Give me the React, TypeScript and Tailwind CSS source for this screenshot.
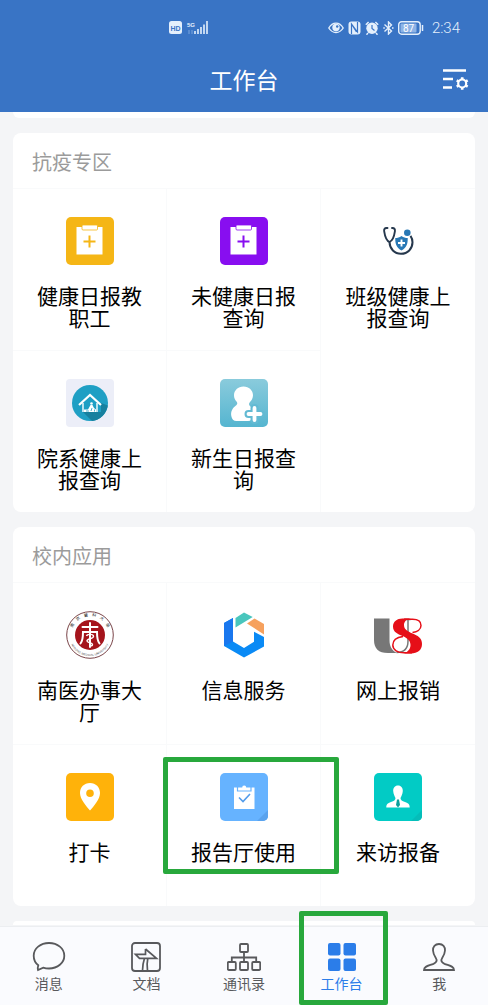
import React from 'react';

interface AppItem {
  name: string;
  icon: React.ReactNode;
  highlighted?: boolean;
}

interface TabItem {
  name: string;
  icon: React.ReactNode;
  active?: boolean;
}

const ClipboardPlusIcon: React.FC<{ color: string }> = ({ color }) => (
  <svg viewBox="0 0 48 48" className="size-12" aria-hidden="true">
    <rect width="48" height="48" rx="5" fill={color} />
    <path d="M10.5 10h26v27.5h-26z" fill="#fff" />
    <rect x="16" y="8" width="15.500" height="5" rx="1" fill="#fff" stroke={color} strokeWidth="0.800" />
    <path d="M23.500 18.500v12M17.500 24.500h12" stroke={color} strokeWidth="2" />
  </svg>
);

const StethoscopeIcon = () => (
  <svg viewBox="0 0 48 48" className="size-12" aria-hidden="true" fill="none">
    <path
      d="M13.500 11h-1c-2 0-2.700 1.300-2.300 3.300.6 4 2.500 9.500 5.300 10.700 2.800-1.200 4.800-6.700 5.400-10.700.3-2-.5-3.300-2.400-3.300h-.5"
      stroke="#26384d"
      strokeWidth="1.900"
      strokeLinecap="round"
    />
    <path d="M15.500 25c.2 7 5 11.800 11.500 11.800 6.700 0 11.500-5 11.500-11.500 0-2.500-.8-4.800-2-6.500" stroke="#26384d" strokeWidth="2" />
    <circle cx="33.300" cy="15.700" r="3.300" fill="#2878b5" />
    <path d="M27.500 19c2 1.500 4 2 6.200 2 .2 6-1.400 10-6.200 12.500-4.800-2.500-6.400-6.500-6.200-12.500 2.200 0 4.200-.5 6.200-2z" fill="#2878b5" />
    <path d="M27.500 22.500v7M24 26h7" stroke="#fff" strokeWidth="1.900" />
  </svg>
);

const HouseIcon = () => (
  <svg viewBox="0 0 48 48" className="size-12" aria-hidden="true" fill="none">
    <rect width="48" height="48" rx="4" fill="#eceef8" />
    <circle cx="24" cy="24" r="18" fill="#1f9fc4" />
    <path d="m35 24 6.800 2.500A18 18 0 0 1 26 41.900L17 33h18z" fill="#17809f" />
    <path d="M13 26 24 16l11 10" stroke="#fff" strokeWidth="2.200" />
    <path d="M17 24v9M31 24v9" stroke="#fff" strokeWidth="1.400" />
    <circle cx="25.500" cy="24.500" r="1.300" fill="#fff" />
    <path d="M18 30.500h4l2.500-4.500h2l1.500 3 2 1.500v2.500H18z" fill="#fff" />
    <path d="M20 32h3M26 29l-1 3M28.500 30.500v2" stroke="#1f9fc4" strokeWidth="0.800" />
  </svg>
);

const NewStudentIcon = () => (
  <svg viewBox="0 0 48 48" className="size-12" aria-hidden="true">
    <defs>
      <linearGradient id="student-bg" x1="0" y1="0" x2="0" y2="1">
        <stop offset="0" stopColor="#8acbdc" />
        <stop offset="1" stopColor="#55b5d0" />
      </linearGradient>
    </defs>
    <rect width="48" height="48" rx="5" fill="url(#student-bg)" />
    <path
      d="M23.500 7.500c5.500 0 9.500 4 9.500 8.700 0 3-1.500 5.300-3 6.800-1.500 1.700-1.200 3 .5 4.500 2.500 2.500 3 5.500 2.500 9-.4 3.500-2 5.500-5 5.500H16.500c-3 0-4.700-2-5.200-5-.8-4.500 1.200-8 5.200-11 1.200-1.200 1-2.300 0-3.500-1.500-1.700-2.500-3.500-2.500-6.300 0-4.700 4-8.700 9.500-8.700z"
      fill="#fff"
    />
    <path d="M34.500 29v12M28.500 35h12" stroke="#63bad3" strokeWidth="8" strokeLinecap="round" />
    <path d="M34.500 29v12M28.500 35h12" stroke="#fff" strokeWidth="3.800" strokeLinecap="round" />
  </svg>
);

const UniversityIcon = () => (
  <svg viewBox="0 0 48 48" className="size-12" aria-hidden="true" fill="none">
    <defs>
      <path id="seal-top" d="M5.700 27A18.600 18.600 0 1 1 42.300 27" />
      <path id="seal-bottom" d="M5 33A21 21 0 0 0 43 33" />
    </defs>
    <circle cx="24" cy="24" r="23.300" fill="#fff" stroke="#6b3034" strokeWidth="0.900" />
    <circle cx="24" cy="24" r="15" fill="#a5141c" />
    <text fill="#222" className="font-['Noto_Sans_CJK_SC',sans-serif] text-[4px]">
      <textPath href="#seal-top" startOffset="50%" textAnchor="middle">南　京　醫　科　大　學</textPath>
    </text>
    <text fill="#555" className="font-['Liberation_Sans',sans-serif] text-[3px]">
      <textPath href="#seal-bottom" startOffset="50%" textAnchor="middle">NANJING MEDICAL UNIVERSITY</textPath>
    </text>
    <path
      d="M16.500 16h15M24 12v24M14.500 32.500c2-2.500 2.500-6 2.500-11.500h14c0 5.500.5 9 2.500 11.500"
      stroke="#fff"
      strokeWidth="2"
      strokeLinecap="round"
    />
    <path d="M20.500 25c.5-2 7-2.500 7 .5 0 2.500-6.500 2-6.500 4.500 0 2 5.500 1.500 5.500 3.500 0 1-1.500 1.500-2.500 1.500" stroke="#fff" strokeWidth="1.400" />
  </svg>
);

const HexagonIcon = () => (
  <svg viewBox="0 0 48 48" className="size-12" aria-hidden="true">
    <path d="M4 12l9-5v23.500l11 6.500 10-6.300v-10l10 5.300v9.500L24 46.500 4 35z" fill="#0a8af5" />
    <path d="M4 12l9-5v23.500L4 35z" fill="#1977ee" />
    <path d="M15.500 7 24 1.500 32.700 6 15.500 16.500z" fill="#49c6bd" />
    <path d="M34.500 7.500 44 13v10.500L27 12.500z" fill="#f6a15e" />
  </svg>
);

const ExpenseIcon = () => (
  <svg viewBox="0 0 48 48" className="size-12" aria-hidden="true" fill="none">
    <path d="M0 7.500h15.500V29c0 6 2 10.500 7.500 13h-9C4.500 42 0 37.500 0 29z" fill="#777" />
    <path d="M30.500 8.500h6M34 8.500V30c0 7-3 11.500-11.500 11.500" stroke="#777" strokeWidth="1.500" />
    <path d="M30 8.300h8.500c5 0 8.500 2.200 8.500 6.200s-4 6.500-8.500 7M29 25.500c-6 .8-10.200 3.500-10.200 8.500s5 7.800 11.200 7.800h8" stroke="#e60f18" strokeWidth="1.500" />
    <path
      d="M28.500 7.500c-5.500 0-9.500 3-9.500 8 0 5.500 4.500 7.500 9.500 9.500 5 2.200 8 4.500 8 9 0 4.200-3 7-6.500 8.500h7c6.500 0 11-3.500 11-9.500 0-6-4.500-8.500-9.500-10.500-5-2.300-8.500-4-8.500-8.500 0-3.500 2.500-5.500 6-6.500z"
      fill="#e60f18"
    />
  </svg>
);

const LocationIcon = () => (
  <svg viewBox="0 0 48 48" className="size-12" aria-hidden="true">
    <rect width="48" height="48" rx="5" fill="#ffb20a" />
    <path
      fillRule="evenodd"
      d="M24 10c5.800 0 10 4.300 10 10 0 6-6 13-10 17.500C20 33 14 26 14 20c0-5.700 4.200-10 10-10zm0 6.500a3.800 3.800 0 1 0 0 7.600 3.800 3.800 0 0 0 0-7.600z"
      fill="#fff"
    />
  </svg>
);

const ReportIcon = () => (
  <svg viewBox="0 0 48 48" className="size-12" aria-hidden="true" fill="none">
    <rect width="48" height="48" rx="5" fill="#66b3ff" />
    <path d="M48 37v6a5 5 0 0 1-5 5h-6z" fill="#5aa3ee" />
    <path d="M14 14.500h20.500v21.500H14z" fill="#fff" />
    <path d="M17.500 18v-4h4.200c.3-2.700 4.700-2.700 5 0h4.300v4z" fill="#fff" stroke="#66b3ff" strokeWidth="1.200" />
    <path d="m19 24.500 4 4 7-7.500" stroke="#529ceb" strokeWidth="1.600" />
  </svg>
);

const VisitorIcon = () => (
  <svg viewBox="0 0 48 48" className="size-12" aria-hidden="true">
    <rect width="48" height="48" rx="5" fill="#02cbc5" />
    <path d="M48 37v6a5 5 0 0 1-5 5h-6z" fill="#05bdb9" />
    <path
      d="M24 12.500c3.200 0 5 2.500 4.800 5.500-.2 3-1.500 5.500-2.300 7 0 2 1.500 3 4.500 4 3.500 1.200 4.700 2.500 4.700 5.500H12.300c0-3 1.200-4.300 4.700-5.500 3-1 4.500-2 4.500-4-.8-1.500-2.100-4-2.300-7-.2-3 1.600-5.500 4.800-5.500z"
      fill="#fff"
    />
    <path d="M23 26.500h2l1 5.500-2 2.500-2-2.500z" fill="#0b9f9c" />
  </svg>
);

const healthApps: AppItem[] = [
  { name: '健康日报教职工', icon: <ClipboardPlusIcon color="#f5b616" /> },
  { name: '未健康日报查询', icon: <ClipboardPlusIcon color="#880ef0" /> },
  { name: '班级健康上报查询', icon: <StethoscopeIcon /> },
  { name: '院系健康上报查询', icon: <HouseIcon /> },
  { name: '新生日报查询', icon: <NewStudentIcon /> },
];

const campusApps: AppItem[] = [
  { name: '南医办事大厅', icon: <UniversityIcon /> },
  { name: '信息服务', icon: <HexagonIcon /> },
  { name: '网上报销', icon: <ExpenseIcon /> },
  { name: '打卡', icon: <LocationIcon /> },
  { name: '报告厅使用', icon: <ReportIcon />, highlighted: true },
  { name: '来访报备', icon: <VisitorIcon /> },
];

const tabs: TabItem[] = [
  {
    name: '消息',
    icon: <path d="M17 2c8.600 0 15.300 5.500 15.300 12.700S25.600 27.500 17 27.500c-2 0-4-.3-5.800-.9L6 29c-.5-1.500-.2-3.200.3-4.700-2.900-2.300-4.600-5.500-4.600-9.600C1.700 7.500 8.400 2 17 2z" />,
  },
  {
    name: '文档',
    icon: (
      <>
        <rect x="3" y="2" width="28" height="28" rx="3" />
        <path d="m16.500 8 11 9.300h-8.700c-.8 3.500-.8 8-.3 12.200M16.500 8v5.300H6.500l4 4h5c-1.300 4-2 8-2 12.200M15.500 17.300h4" strokeWidth="1.700" />
      </>
    ),
  },
  {
    name: '通讯录',
    icon: (
      <>
        <rect x="13" y="3" width="8" height="8" rx="1" />
        <rect x="0.800" y="21" width="8" height="8" rx="1" />
        <rect x="13" y="21" width="8" height="8" rx="1" />
        <rect x="25.200" y="21" width="8" height="8" rx="1" />
        <path d="M17 11v10M4.800 21v-4.500h24.400V21" />
      </>
    ),
  },
  {
    name: '工作台',
    active: true,
    icon: (
      <g fill="currentColor" stroke="none">
        <rect x="3" y="2" width="12.500" height="12.500" rx="2" />
        <rect x="18.500" y="2" width="12.500" height="12.500" rx="2" />
        <rect x="3" y="17.500" width="12.500" height="12.500" rx="2" />
        <rect x="18.500" y="17.500" width="12.500" height="12.500" rx="2" />
      </g>
    ),
  },
  {
    name: '我',
    icon: (
      <path d="M17 3c4 0 6.200 2.800 6 6.500-.2 3-1.300 5.300-2.800 7.500-1.700 2.500-.7 4.500 2.300 5.800 5 2 9.500 2.500 9.500 6.200H2c0-3.700 4.500-4.200 9.500-6.200 3-1.300 4-3.300 2.300-5.800-1.500-2.200-2.600-4.500-2.800-7.500C10.800 5.800 13 3 17 3z" />
    ),
  },
];

const StatusBar = () => (
  <div className="flex h-[56px] items-center justify-between pr-[28px] pl-[169px] text-[#e4effc]">
    <svg viewBox="0 0 40 14" className="h-[14px] w-[40px]" role="img" aria-label="信号">
      <rect width="13" height="13" rx="2.500" fill="currentColor" />
      <text x="1.500" y="9.500" fill="#3974c5" className="font-['Liberation_Sans',sans-serif] text-[7px] font-bold">HD</text>
      <text x="18" y="5.500" fill="currentColor" className="font-['Liberation_Sans',sans-serif] text-[6px] font-bold">5G</text>
      <path d="M20 9v4M23 9v4" stroke="#7da5dd" strokeWidth="1" />
      <path d="M26 10v3M29 8v5M32 6v7M35 3.500V13M38 0v13" stroke="currentColor" strokeWidth="1.600" />
    </svg>
    <div className="flex items-center gap-1">
      <svg viewBox="0 0 16 14" className="h-[14px] w-[16px]" fill="none" aria-hidden="true">
        <path d="M.8 7C4.500.5 11.500.5 15.200 7 11.500 13 4.500 13 .8 7z" stroke="currentColor" strokeWidth="1.400" />
        <circle cx="8" cy="6.500" r="3.700" fill="currentColor" />
        <circle cx="9.200" cy="5.500" r="1.200" fill="#3974c5" />
      </svg>
      <svg viewBox="0 0 13 14" className="h-[14px] w-[13px]" fill="none" aria-hidden="true">
        <rect x="0.500" y="0.500" width="12" height="13" rx="3" fill="currentColor" />
        <path d="M3.500 13V3l6 8V1M3.500 3l5 8" stroke="#3974c5" strokeWidth="1.200" />
      </svg>
      <svg viewBox="0 0 14 14" className="h-[14px] w-[14px]" fill="none" aria-hidden="true">
        <circle cx="7" cy="7.300" r="5.700" fill="currentColor" />
        <path d="M.8 3.800 3.600 1M13.200 3.800 10.400 1M3 12l-1.500 1.700M11 12l1.500 1.700" stroke="currentColor" strokeWidth="1.500" />
        <path d="M7 4v3.500l2.500 2" stroke="#3974c5" strokeWidth="1.200" />
      </svg>
      <svg viewBox="0 0 11 14" className="h-[14px] w-[11px]" fill="none" stroke="currentColor" aria-hidden="true">
        <path d="m1.500 3.500 7 6.500-3 3V1l3 3-7 6.500" strokeWidth="1.400" />
        <path d="M.3 7h1.500M9 7h1.500" strokeWidth="1.500" />
      </svg>
      <svg viewBox="0 0 26 14" className="h-[14px] w-[26px]" role="img" aria-label="电量">
        <rect x="0.700" y="0.700" width="21.500" height="12.500" rx="3" fill="none" stroke="currentColor" strokeWidth="1.400" />
        <rect x="2.500" y="2.500" width="16" height="9" rx="1" fill="#8db3e6" />
        <text x="5" y="10.500" fill="#fff" className="font-['Roboto',sans-serif] text-[10px]">87</text>
        <path d="M24.500 4v6" stroke="currentColor" strokeWidth="1.500" />
      </svg>
      <span className="pl-1 font-['Roboto',sans-serif] text-[15px] leading-4 font-light">2:34</span>
    </div>
  </div>
);

const Header = () => (
  <header className="bg-[#3974c5] text-white">
    <StatusBar />
    <div className="grid h-[56px] grid-cols-[1fr_auto_1fr] items-start pt-[7px]">
      <h1 className="col-start-2 text-[23px] leading-8">工作台</h1>
      <button type="button" aria-label="工作台设置" className="mt-[5px] mr-[19px] justify-self-end">
        <svg viewBox="0 0 26 24" className="h-[24px] w-[26px]" fill="none" stroke="currentColor" aria-hidden="true">
          <path d="M0 2.500h23M0 11h10M0 19.500h9" strokeWidth="2.600" />
          <circle cx="19.200" cy="15.500" r="4" strokeWidth="2.200" />
          <path
            d="M19.200 9.200v2M19.200 19.800v2M13.700 12.300l1.800 1M22.900 17.700l1.800 1M13.700 18.700l1.800-1M22.900 13.300l1.800-1"
            strokeWidth="2.600"
          />
        </svg>
      </button>
    </div>
  </header>
);

const AppCard: React.FC<{ title: string; items: AppItem[] }> = ({ title, items }) => (
  <section className="rounded-[8px] bg-white">
    <h2 className="px-[19px] pt-[15px] pb-3 text-[20px] leading-7 text-[#9b9b9b]">{title}</h2>
    <div className="grid grid-cols-3">
      {items.map((item) => (
        <button
          key={item.name}
          type="button"
          className="relative flex h-[162px] flex-col items-center border-t border-r border-[#f9fafb] px-6 pt-7 nth-[3n]:border-r-0"
        >
          {item.icon}
          <span className="mt-[19px] text-[21px] leading-[22px] text-black">{item.name}</span>
          {item.highlighted && (
            <span className="pointer-events-none absolute top-3 -right-[19px] bottom-8 -left-1 z-10 rounded-[2px] border-5 border-[#28a83c]" />
          )}
        </button>
      ))}
    </div>
  </section>
);

const TabBar = () => (
  <nav className="grid h-[79px] grid-cols-5 border-t border-[#eceef1] bg-[#fafbfe]">
    {tabs.map((tab) => (
      <button
        key={tab.name}
        type="button"
        className={`relative flex flex-col items-center pt-[14px] ${tab.active ? 'text-[#2b7de9]' : 'text-[#58595c]'}`}
      >
        <svg viewBox="0 0 34 32" className="h-[32px] w-[34px]" fill="none" stroke="currentColor" strokeWidth="1.800" aria-hidden="true">
          {tab.icon}
        </svg>
        <span className="text-[14px] leading-5">{tab.name}</span>
        {tab.active && (
          <span className="pointer-events-none absolute -top-4 right-[2px] bottom-0 left-[6px] z-10 rounded-[2px] border-5 border-[#28a83c]" />
        )}
      </button>
    ))}
  </nav>
);

const App: React.FC = () => {
  return (
    <div className="flex min-h-screen flex-col bg-[#f4f5f7] font-['Noto_Sans_CJK_SC',sans-serif]">
      <Header />
      <main className="flex flex-1 flex-col gap-[15px] px-[13px]">
        {/* tail of the section scrolled under the header */}
        <div className="h-[6px] rounded-b-[8px] bg-white" />
        <AppCard title="抗疫专区" items={healthApps} />
        <AppCard title="校内应用" items={campusApps} />
        <div className="h-1 rounded-t-[8px] bg-white" />
      </main>
      <TabBar />
    </div>
  );
};

export default App;
